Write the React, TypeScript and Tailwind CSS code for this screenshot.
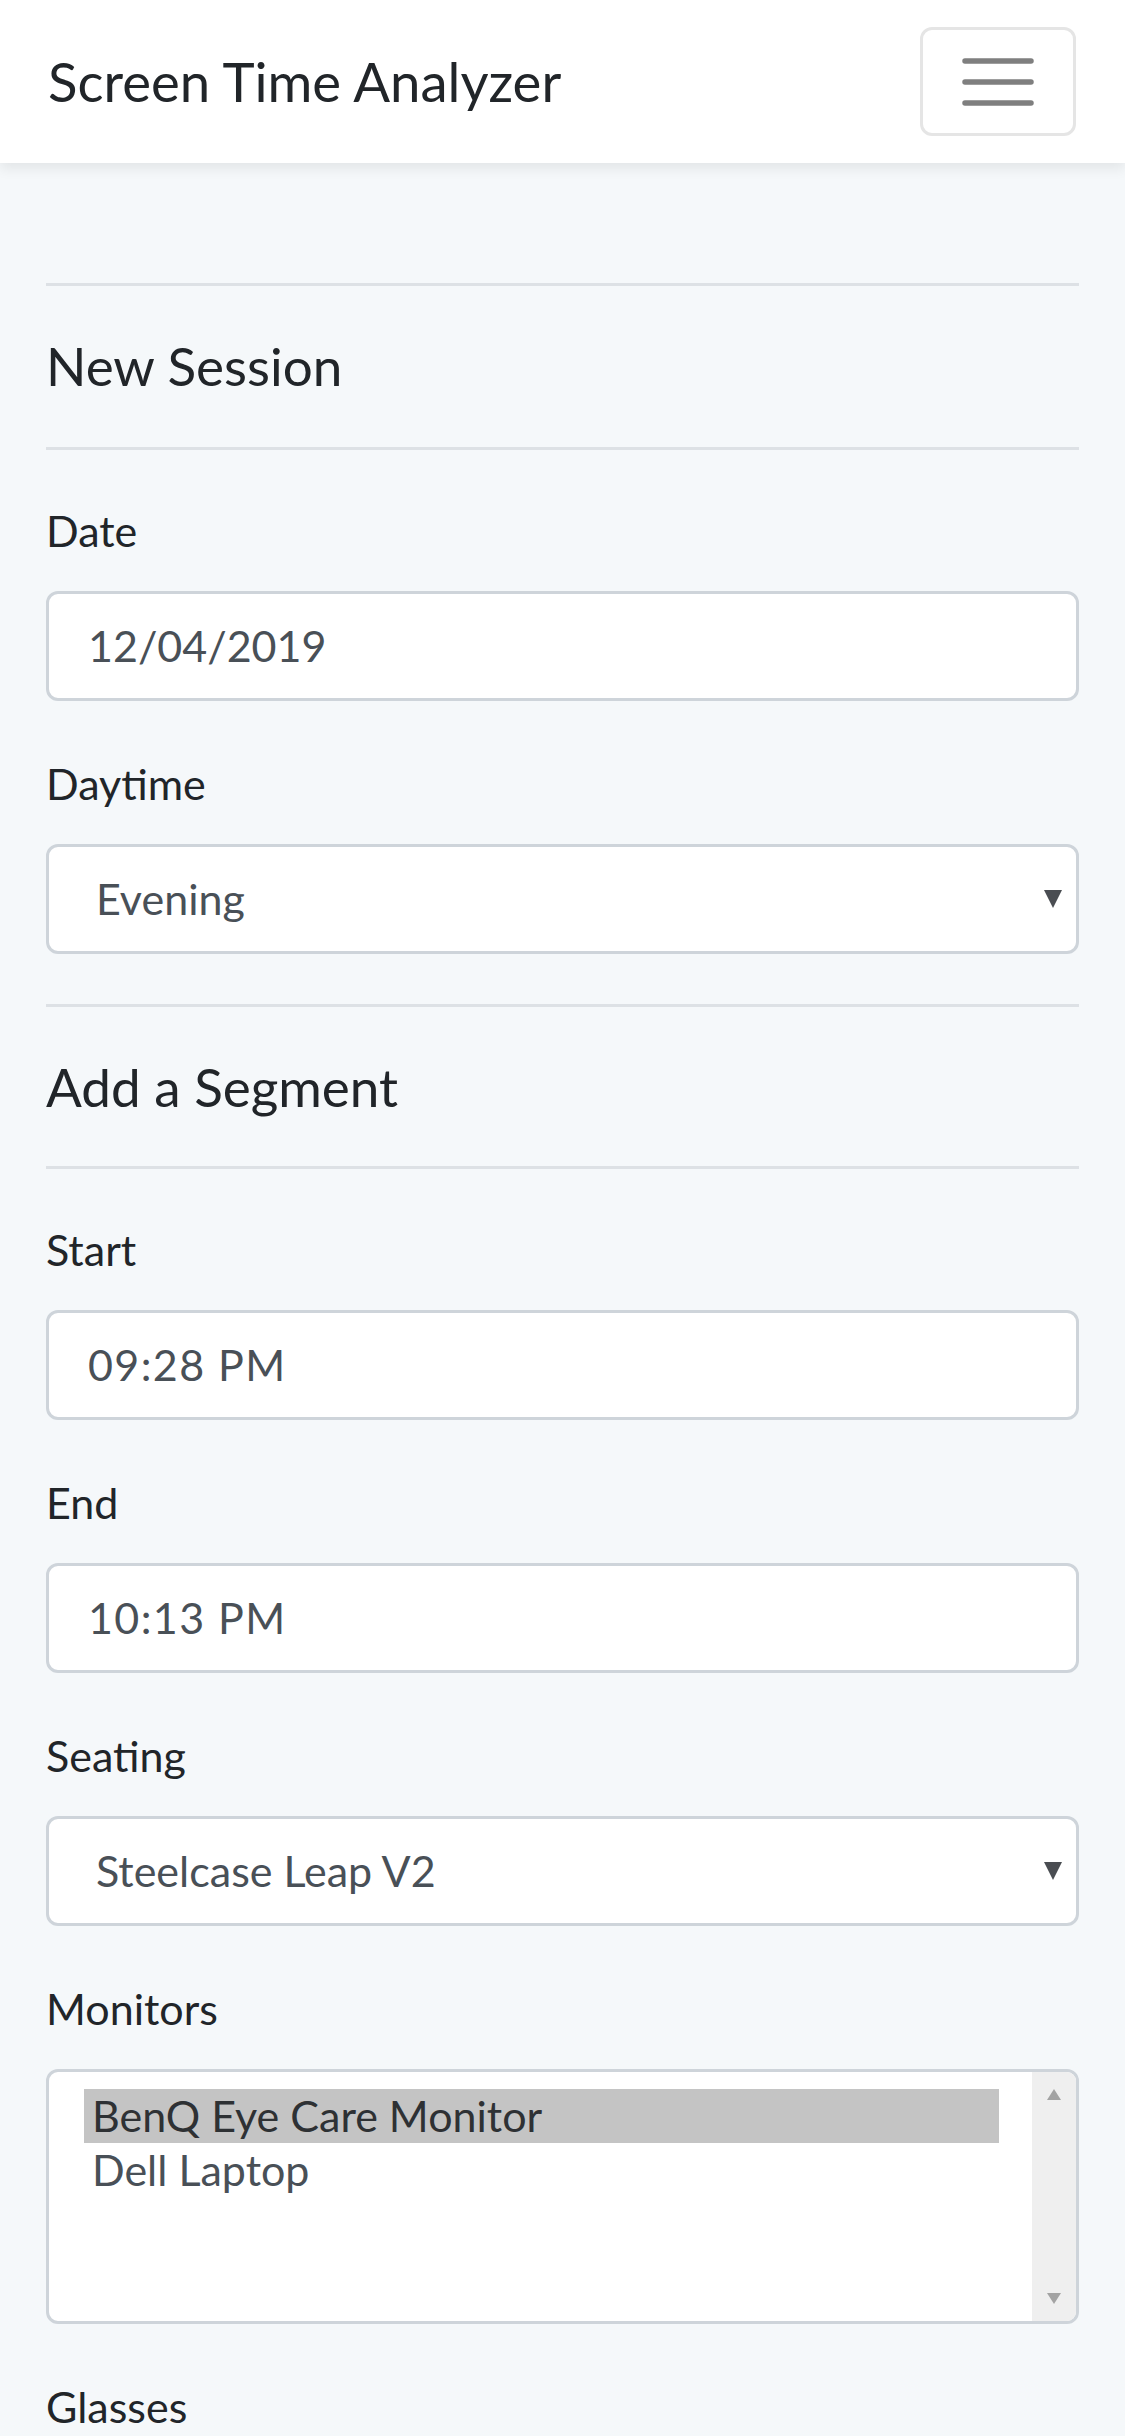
import React from 'react';

function Label({ children }: { children: React.ReactNode }) {
  return <div className="h-[65px] mb-[28px] text-[43px] leading-[65px] text-[#212529]">{children}</div>;
}

function TextBox({ value, wide }: { value: string; wide?: boolean }) {
  return (
    <div
      className={`h-[110px] bg-white border-[3px] border-[#ced4da] rounded-[12px] flex items-center pl-[39px] text-[43px] text-[#495057] ${
        wide ? 'tracking-[1.4px]' : ''
      }`}
    >
      {value}
    </div>
  );
}

function SelectBox({ value }: { value: string }) {
  return (
    <div className="h-[110px] bg-white border-[3px] border-[#ced4da] rounded-[12px] flex items-center justify-between pl-[47px] pr-[14px] text-[43px] text-[#495057]">
      <span>{value}</span>
      <svg width="18" height="18" viewBox="0 0 18 18">
        <path d="M0 0 H18 L9 18 Z" fill="#4a4d52" />
      </svg>
    </div>
  );
}

function Heading({ children }: { children: React.ReactNode }) {
  return <h2 className="mt-[49px] h-[62px] text-[53px] leading-[62px] text-[#212529]">{children}</h2>;
}

function Rule({ top }: { top: string }) {
  return <div className={`${top} h-[3px] bg-[#dde1e5]`} />;
}

export default function App() {
  return (
    <div className="h-[2436px] overflow-hidden bg-[#f5f8fa] font-['Lato','Open_Sans',sans-serif]">
      {/* navbar */}
      <header className="relative z-10 h-[163px] bg-white shadow-[0_6px_12px_rgba(0,0,0,0.075)] flex items-center justify-between pl-[48px] pr-[49px]">
        <span className="text-[54.5px] leading-[1.2] text-[#212529]">Screen Time Analyzer</span>
        <button className="w-[156px] h-[109px] border-[3px] border-[#e5e5e5] rounded-[12px] flex items-center justify-center">
          <svg width="72" height="52" viewBox="0 0 72 52">
            <path d="M3 5H69M3 26H69M3 47H69" stroke="#7f7f7f" strokeWidth="5.5" strokeLinecap="round" />
          </svg>
        </button>
      </header>

      <main className="px-[46px]">
        <div className="h-[120px]" />
        <Rule top="mt-0" />
        <Heading>New Session</Heading>
        <Rule top="mt-[50px]" />

        <div className="mt-[48px] mb-[50px]">
          <Label>Date</Label>
          <TextBox value="12/04/2019" />
        </div>
        <div className="mb-[50px]">
          <Label>Daytime</Label>
          <SelectBox value="Evening" />
        </div>

        <Rule top="mt-0" />
        <Heading>Add a Segment</Heading>
        <Rule top="mt-[48px]" />

        <div className="mt-[48px] mb-[50px]">
          <Label>Start</Label>
          <TextBox value="09:28 PM" wide />
        </div>
        <div className="mb-[50px]">
          <Label>End</Label>
          <TextBox value="10:13 PM" wide />
        </div>
        <div className="mb-[50px]">
          <Label>Seating</Label>
          <SelectBox value="Steelcase Leap V2" />
        </div>
        <div className="mb-[50px]">
          <Label>Monitors</Label>
          <div className="h-[255px] bg-white border-[3px] border-[#ced4da] rounded-[12px] flex overflow-hidden">
            <div className="flex-1 pt-[17px] pl-[35px] pr-[33px]">
              <div className="h-[54px] bg-[#c4c4c4] pl-[8px] text-[43px] leading-[54px] text-[#2e3134]">BenQ Eye Care Monitor</div>
              <div className="h-[54px] pl-[8px] text-[43px] leading-[54px] text-[#495057]">Dell Laptop</div>
            </div>
            <div className="w-[44px] bg-[#efefef] flex flex-col items-center justify-between pt-[17px] pb-[17px]">
              <svg width="14" height="11" viewBox="0 0 14 11">
                <path d="M7 0 L14 11 H0 Z" fill="#a3a3a3" />
              </svg>
              <svg width="14" height="11" viewBox="0 0 14 11">
                <path d="M0 0 H14 L7 11 Z" fill="#a3a3a3" />
              </svg>
            </div>
          </div>
        </div>
        <div>
          <Label>Glasses</Label>
        </div>
      </main>
    </div>
  );
}
